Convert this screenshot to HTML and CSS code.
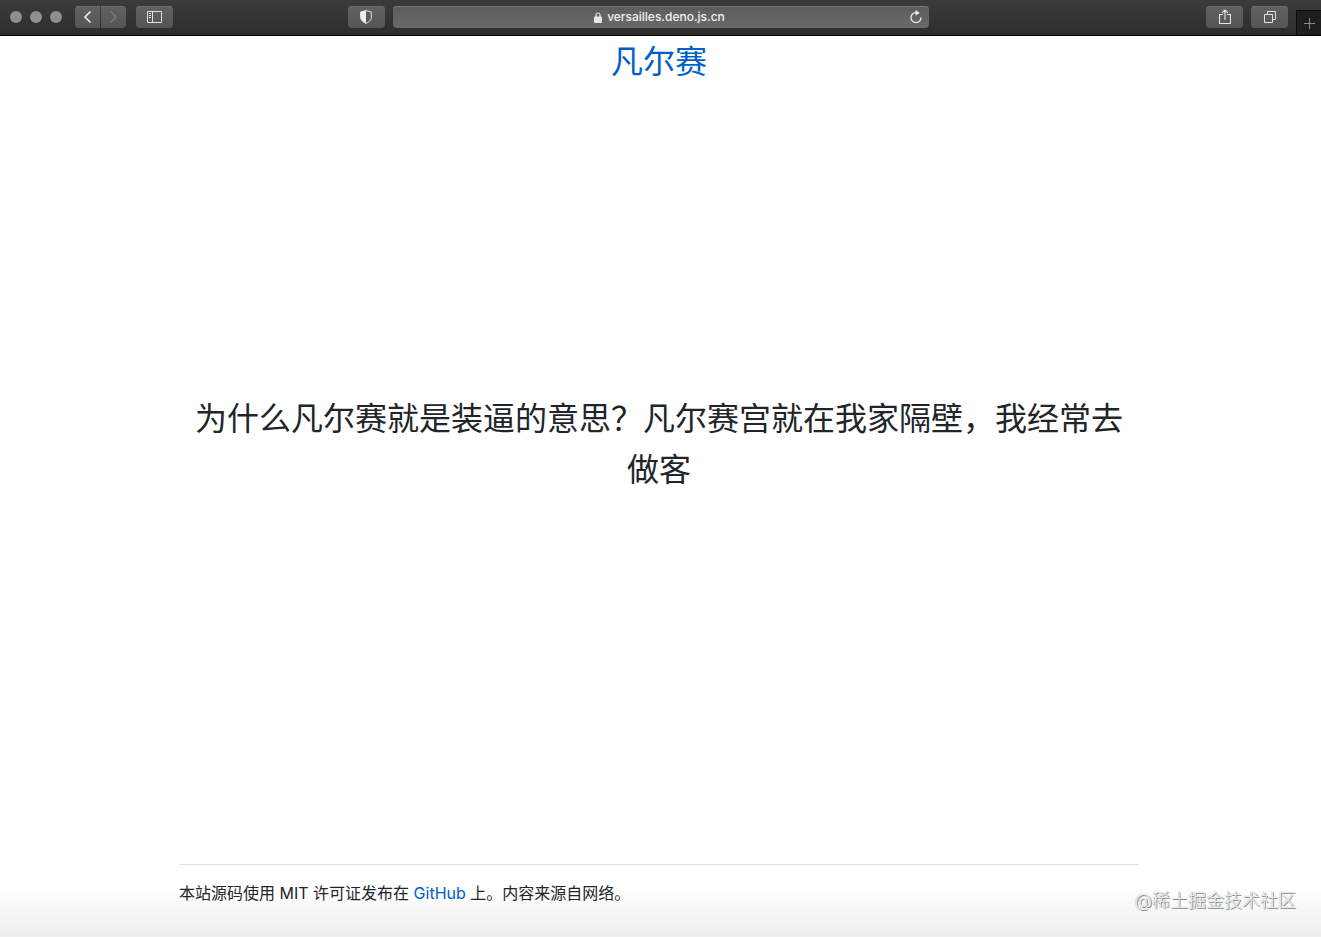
FILE: index.html
```html
<!DOCTYPE html>
<html lang="zh-CN">
<head>
<meta charset="utf-8">
<meta name="viewport" content="width=device-width, initial-scale=1">
<title>凡尔赛</title>
<link rel="stylesheet" href="styles.css">
</head>
<body>
<header class="toolbar">
  <div class="toolbar-left">
    <div class="lights"><span class="light"></span><span class="light"></span><span class="light"></span></div>
    <div class="history">
      <button class="tool tool-back" type="button" aria-label="后退"><svg width="9" height="14" viewBox="0 0 9 14"><path d="M7.500 1.500 2 7 7.500 12.500" fill="none" stroke="#eee" stroke-width="1.600"/></svg></button>
      <button class="tool tool-forward" type="button" aria-label="前进"><svg width="9" height="14" viewBox="0 0 9 14"><path d="M1.500 1.500 7 7 1.500 12.500" fill="none" stroke="#7c7c7c" stroke-width="1.400"/></svg></button>
    </div>
    <button class="tool tool-wide" type="button" aria-label="边栏"><svg width="15" height="12" viewBox="0 0 15 12"><path d="M.5.5h14v11H.5zM5.500.5v11M2 2.500h2M2 4.500h2M2 6.500h2" fill="none" stroke="#e2e2e2"/></svg></button>
    <button class="tool tool-wide tool-shield" type="button" aria-label="隐私报告"><svg width="12" height="14" viewBox="0 0 12 14"><path d="M6 .6 11.400 2v5.600c0 2.600-2.600 4.500-5.400 5.800C3.200 12.100.6 10.200.6 7.600V2z" fill="none" stroke="#ddd"/><path d="M6 .6.6 2v5.600C.6 10.200 3.200 12.100 6 13.400z" fill="#f0f0f0"/></svg></button>
  </div>
  <div class="address">
    <a class="address-site" href="#"><svg width="8" height="11" viewBox="0 0 8 11"><path d="M2 5V3a2 2 0 0 1 4 0v2" fill="none" stroke="#e6e6e6" stroke-width="1.200"/><rect y="4.500" width="8" height="6.500" rx="1" fill="#e6e6e6"/></svg><span>versailles.deno.js.cn</span></a>
    <button class="reload" type="button" aria-label="重新载入"><svg width="14" height="14" viewBox="0 0 14 14"><path d="M7 2.600a5 5 0 1 0 5 5" fill="none" stroke="#eee" stroke-width="1.300"/><path d="M6.500 0v5.600L10.800 2.900z" fill="#eee"/></svg></button>
  </div>
  <div class="toolbar-right">
    <button class="tool tool-wide" type="button" aria-label="共享"><svg width="12" height="16" viewBox="0 0 12 16"><path d="M4 5.500H.5v9h11v-9H8M6 11V1M3 3.800 6 .9l3 2.900" fill="none" stroke="#e8e8e8" stroke-width="1.100"/></svg></button>
    <button class="tool tool-wide" type="button" aria-label="标签页概览"><svg width="12" height="12" viewBox="0 0 12 12"><path d="M.5 3.500h8v8h-8zM3.500 3.500v-3h8v8h-3" fill="none" stroke="#e2e2e2"/></svg></button>
    <button class="new-tab" type="button" aria-label="新建标签页"><svg width="11" height="11" viewBox="0 0 11 11"><path d="M5.500 0v11M0 5.500h11" stroke="#8a8a8a"/></svg></button>
  </div>
</header>
<div class="page">
  <h1 class="site-title"><a href="#">凡尔赛</a></h1>
  <main class="quote"><p>为什么凡尔赛就是装逼的意思？凡尔赛宫就在我家隔壁，我经常去做客</p></main>
  <footer class="footer"><p>本站源码使用 MIT 许可证发布在 <a href="#">GitHub</a> 上。内容来源自网络。</p></footer>
</div>
<div class="watermark">@稀土掘金技术社区</div>
</body>
</html>
```
FILE: styles.css
```css
* { box-sizing: border-box; }

body {
  margin: 0;
  min-height: 100vh;
  display: flex;
  flex-direction: column;
  color: #212529;
  background: #fff linear-gradient(#fff, #ededed) bottom / 100% 48px no-repeat;
  font: 16px/24px Inter, "Noto Sans CJK SC", sans-serif;
}

h1, p { margin: 0; font-weight: 400; }
a { color: #0060c8; text-decoration: none; }
svg { display: block; }
button { border: 0; padding: 0; background: none; }

.toolbar {
  display: grid;
  grid-template-columns: 1fr minmax(0, 536px) 1fr;
  height: 36px;
  background: linear-gradient(#3b3b3b, #2d2d2d);
  border-bottom: 1px solid #000;
}

.toolbar-left, .toolbar-right {
  display: flex;
  align-items: flex-start;
  padding-top: 6px;
}
.toolbar-left { padding-left: 10px; padding-right: 8px; }
.toolbar-right { justify-content: flex-end; gap: 8px; }

.lights { display: flex; gap: 8px; padding-top: 5px; margin-right: 13px; }
.light { width: 12px; height: 12px; border-radius: 50%; background: #8e8e8e; }
.history { display: flex; gap: 1px; margin-right: 10px; }

.tool {
  display: flex;
  align-items: center;
  justify-content: center;
  width: 25px;
  height: 22px;
  border-radius: 4px;
  background: linear-gradient(#616161, #565656);
  box-shadow: inset 0 1px #6c6c6c;
}
.tool-back { border-radius: 4px 0 0 4px; }
.tool-forward { border-radius: 0 4px 4px 0; }
.tool-wide { width: 37px; }
.tool-shield { margin-left: auto; }

.address {
  display: flex;
  align-items: center;
  height: 22px;
  margin-top: 6px;
  padding: 0 6px 0 18px;
  border-radius: 4px;
  background: linear-gradient(#5c5c5c, #6a6a6a);
  box-shadow: inset 0 1px #757575;
}
.address-site {
  flex: 1;
  display: flex;
  align-items: center;
  justify-content: center;
  gap: 5px;
  color: #f2f2f2;
  font-size: 12px;
  font-weight: 500;
}

.new-tab {
  display: flex;
  align-items: center;
  justify-content: center;
  width: 25px;
  height: 25px;
  margin-top: 4px;
  background: #1e1e1e;
  border: 1px solid #0a0a0a;
  border-width: 1px 0 0 1px;
}

.page {
  flex: 1;
  display: flex;
  flex-direction: column;
  width: 100%;
  max-width: 963px;
  margin: 0 auto;
  padding-right: 3px;
}

.site-title, .quote { font-size: 32px; text-align: center; }
.site-title { line-height: 52px; }
.quote {
  flex: 1;
  display: flex;
  align-items: center;
  justify-content: center;
  line-height: 51px;
  padding: 0 12px 64px;
}

.footer {
  padding: 16px 0 32px;
  border-top: 1px solid #dee2e6;
}

.watermark {
  position: absolute;
  right: 25px;
  bottom: 24px;
  color: #f4f4f4;
  font-size: 18px;
  font-weight: 300;
  text-shadow: 1px 1px #888, 0 0 1px #999;
}
```
